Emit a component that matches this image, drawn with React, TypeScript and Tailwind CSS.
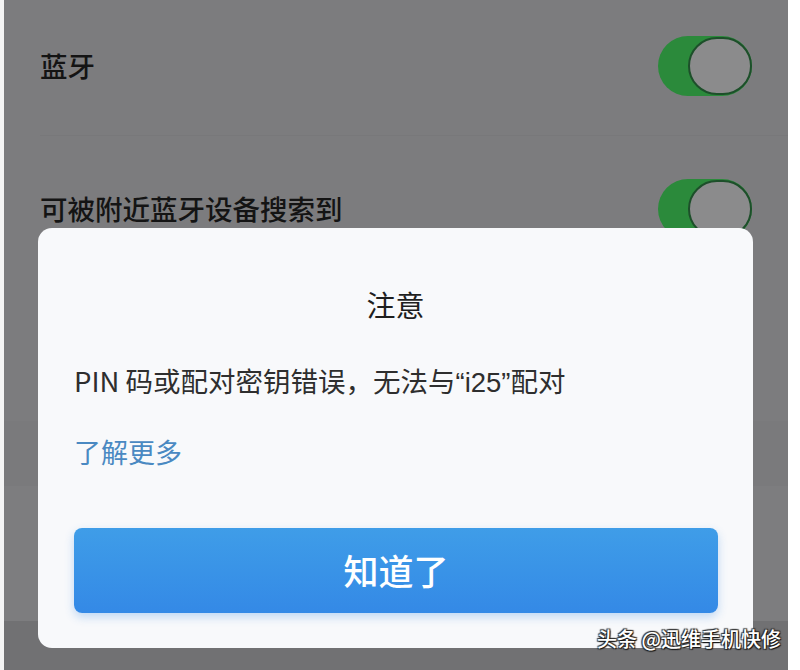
const font = "font-['Noto_Sans_CJK_SC','Noto_Sans',sans-serif]";

function Toggle() {
  return (
    <div className="flex h-[60px] w-[94px] items-center justify-end rounded-full bg-[#2b8a3b]">
      <div className="h-[58px] w-[64px] rounded-full border-2 border-[#1d4f2a] bg-[#8b8b8c]" />
    </div>
  );
}

export default function App() {
  return (
    <div className={`relative flex h-[670px] w-[800px] overflow-hidden bg-white ${font}`}>
      <div className="w-[4px] bg-[#f4f4f4]" />
      <div className="flex flex-1 flex-col bg-[#7c7c7e]">
        <div className="flex h-[135px] items-center justify-between pl-[36px] pr-[36px] pb-[4px]">
          <span className="text-[27.5px] font-medium leading-none text-[#141414]">蓝牙</span>
          <Toggle />
        </div>
        <div className="ml-[36px] h-px bg-[#78787a]" />
        <div className="flex h-[140px] items-center justify-between pl-[36px] pr-[36px] pt-[6px]">
          <span className="text-[27.5px] font-medium leading-none text-[#141414]">可被附近蓝牙设备搜索到</span>
          <Toggle />
        </div>
        <div className="h-[145px]" />
        <div className="h-[65px] bg-[#7a7a7c]" />
        <div className="h-[135px] bg-[#7d7d7f]" />
        <div className="flex-1 bg-[#717173]" />
      </div>
      <div className="w-[12px] bg-white" />

      {/* dialog */}
      <div className="absolute left-[38px] top-[228px] flex h-[420px] w-[715px] flex-col rounded-[14px] bg-[#f8f9fb] px-[36px]">
        <div className="pt-[62px] text-center text-[29px] leading-none text-[#1e1e1e]">注意</div>
        <div className="pt-[48px] text-[27.5px] leading-none text-[#2e2e2e]">
          PIN 码或配对密钥错误，无法与<span className="font-['Liberation_Sans',sans-serif]">“i25”</span>配对
        </div>
        <div className="pt-[41px] text-[27px] leading-none text-[#4a89c2]">了解更多</div>
        <button className="mt-[63px] flex h-[85px] w-[644px] items-center justify-center rounded-[8px] bg-gradient-to-b from-[#3f9de8] to-[#3489e6] text-[35px] font-medium text-white shadow-[0_4px_10px_rgba(60,140,230,0.3)]">
          知道了
        </button>
      </div>

      <div className="absolute left-[597px] top-[629px] text-[20px] font-medium leading-none text-white [text-shadow:1px_1px_1px_#111,-1px_-1px_1px_#333,1px_-1px_1px_#333,-1px_1px_1px_#333]">
        头条 @迅维手机快修
      </div>
    </div>
  );
}
